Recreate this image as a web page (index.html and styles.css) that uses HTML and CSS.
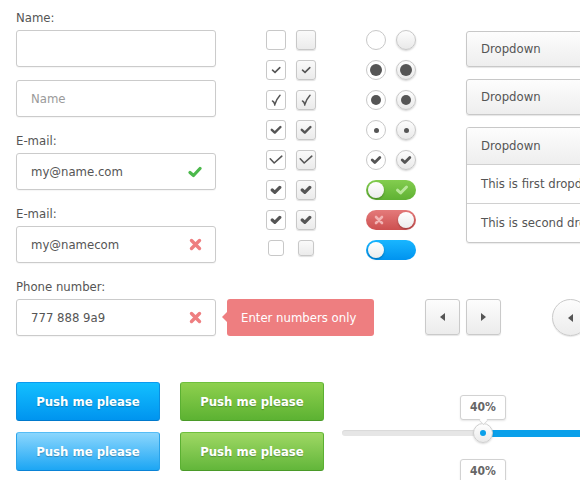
FILE: index.html
```html
<!DOCTYPE html>
<html lang="en">
<head>
    <meta charset="UTF-8">
    <title>UI Kit</title>
    <link rel="stylesheet" href="styles.css">
</head>
<body>
    <div class="top">
        <!-- Text fields -->
        <div class="form">
            <div class="field">
                <label>Name:</label>
                <div class="input"><input type="text" value=""></div>
                <div class="input second"><input type="text" placeholder="Name"></div>
            </div>
            <div class="field">
                <label>E-mail:</label>
                <div class="input">
                    <input type="text" value="my@name.com">
                    <svg class="ico" width="14" height="12" viewBox="0 0 14 12"><path d="M2 6.5 L5.5 9.5 L12 2.5" fill="none" stroke="#4cb94c" stroke-width="3.2" stroke-linecap="round" stroke-linejoin="round"/></svg>
                </div>
            </div>
            <div class="field">
                <label>E-mail:</label>
                <div class="input">
                    <input type="text" value="my@namecom">
                    <svg class="ico" width="13" height="13" viewBox="0 0 13 13"><path d="M2.5 2.5 L10.5 10.5 M10.5 2.5 L2.5 10.5" fill="none" stroke="#ee7e80" stroke-width="3.4" stroke-linecap="round"/></svg>
                </div>
            </div>
        </div>

        <!-- Checkboxes -->
        <div class="checks">
            <span class="cb"></span><span class="cb alt"></span>
            <span class="cb"><svg width="10" height="8" viewBox="0 0 10 8"><path d="M1.5 4.2 L4 6.3 L8.8 1.6" fill="none" stroke="#555" stroke-width="1.6" stroke-linecap="round"/></svg></span>
            <span class="cb alt"><svg width="10" height="8" viewBox="0 0 10 8"><path d="M1.5 4.2 L4 6.3 L8.8 1.6" fill="none" stroke="#555" stroke-width="1.6" stroke-linecap="round"/></svg></span>
            <span class="cb"><svg width="10" height="12" viewBox="0 0 10 12"><path d="M1.5 7 Q3 7.5 3.8 10.5 Q5.5 5 9 1.2" fill="none" stroke="#555" stroke-width="1.5" stroke-linecap="round"/></svg></span>
            <span class="cb alt"><svg width="10" height="12" viewBox="0 0 10 12"><path d="M1.5 7 Q3 7.5 3.8 10.5 Q5.5 5 9 1.2" fill="none" stroke="#555" stroke-width="1.5" stroke-linecap="round"/></svg></span>
            <span class="cb"><svg width="12" height="10" viewBox="0 0 12 10"><path d="M1.8 4.8 L4.8 7.6 L10.4 2" fill="none" stroke="#555" stroke-width="2.4" stroke-linecap="round" stroke-linejoin="round"/></svg></span>
            <span class="cb alt"><svg width="12" height="10" viewBox="0 0 12 10"><path d="M1.8 4.8 L4.8 7.6 L10.4 2" fill="none" stroke="#555" stroke-width="2.4" stroke-linecap="round" stroke-linejoin="round"/></svg></span>
            <span class="cb"><svg width="14" height="10" viewBox="0 0 14 10"><path d="M1.2 3.8 L5.2 8 L12.8 1.2" fill="none" stroke="#555" stroke-width="1.6" stroke-linecap="round" stroke-linejoin="round"/></svg></span>
            <span class="cb alt"><svg width="14" height="10" viewBox="0 0 14 10"><path d="M1.2 3.8 L5.2 8 L12.8 1.2" fill="none" stroke="#555" stroke-width="1.6" stroke-linecap="round" stroke-linejoin="round"/></svg></span>
            <span class="cb"><svg width="12" height="10" viewBox="0 0 12 10"><path d="M2.2 5 L4.8 7.4 L9.8 2.4" fill="none" stroke="#555" stroke-width="3.2" stroke-linecap="round" stroke-linejoin="round"/></svg></span>
            <span class="cb alt"><svg width="12" height="10" viewBox="0 0 12 10"><path d="M2.2 5 L4.8 7.4 L9.8 2.4" fill="none" stroke="#555" stroke-width="3.2" stroke-linecap="round" stroke-linejoin="round"/></svg></span>
            <span class="cb"><svg width="12" height="10" viewBox="0 0 12 10"><path d="M2.2 5 L4.8 7.4 L9.8 2.4" fill="none" stroke="#555" stroke-width="3.2" stroke-linecap="round" stroke-linejoin="round"/></svg></span>
            <span class="cb alt"><svg width="12" height="10" viewBox="0 0 12 10"><path d="M2.2 5 L4.8 7.4 L9.8 2.4" fill="none" stroke="#555" stroke-width="3.2" stroke-linecap="round" stroke-linejoin="round"/></svg></span>
            <span class="cb small"></span><span class="cb alt small"></span>
        </div>

        <!-- Radios and toggles -->
        <div class="radios">
            <span class="rd"></span><span class="rd alt"></span>
            <span class="rd"><i class="dot big"></i></span><span class="rd alt"><i class="dot big"></i></span>
            <span class="rd"><i class="dot mid"></i></span><span class="rd alt"><i class="dot mid"></i></span>
            <span class="rd"><i class="dot tiny"></i></span><span class="rd alt"><i class="dot tiny"></i></span>
            <span class="rd"><svg width="12" height="10" viewBox="0 0 12 10"><path d="M2.2 5 L4.8 7.4 L9.8 2.4" fill="none" stroke="#555" stroke-width="2.8" stroke-linecap="round" stroke-linejoin="round"/></svg></span>
            <span class="rd alt"><svg width="12" height="10" viewBox="0 0 12 10"><path d="M2.2 5 L4.8 7.4 L9.8 2.4" fill="none" stroke="#555" stroke-width="2.8" stroke-linecap="round" stroke-linejoin="round"/></svg></span>
            <span class="tg on">
                <i class="knob"></i>
                <svg width="14" height="12" viewBox="0 0 14 12"><path d="M2.5 6.2 L5.6 9 L11.5 3" fill="none" stroke="#b9e79b" stroke-width="3" stroke-linecap="round" stroke-linejoin="round"/></svg>
            </span>
            <span class="tg off">
                <svg width="12" height="12" viewBox="0 0 12 12"><path d="M3 3 L9 9 M9 3 L3 9" fill="none" stroke="#f2b3b3" stroke-width="2.6" stroke-linecap="round"/></svg>
                <i class="knob"></i>
            </span>
            <span class="tg blue"><i class="knob"></i></span>
        </div>

        <!-- Dropdowns -->
        <div class="drops">
            <div class="dd">Dropdown</div>
            <div class="dd">Dropdown</div>
            <div class="dd-menu">
                <div class="dd-head">Dropdown</div>
                <div class="dd-item">This is first dropdown</div>
                <div class="dd-item">This is second dropdown</div>
            </div>
        </div>
    </div>

    <div class="phone-row">
        <div class="field">
            <label>Phone number:</label>
            <div class="input">
                <input type="text" value="777 888 9a9">
                <svg class="ico" width="13" height="13" viewBox="0 0 13 13"><path d="M2.5 2.5 L10.5 10.5 M10.5 2.5 L2.5 10.5" fill="none" stroke="#ee7e80" stroke-width="3.4" stroke-linecap="round"/></svg>
            </div>
        </div>
        <div class="error-tip">Enter numbers only</div>
        <div class="arrows">
            <span class="arrow-btn"><i class="tri left"></i></span>
            <span class="arrow-btn"><i class="tri right"></i></span>
        </div>
        <span class="round-btn"><i class="tri left"></i></span>
    </div>

    <div class="bottom">
        <div class="buttons">
            <button class="btn blue">Push me please</button>
            <button class="btn green">Push me please</button>
            <button class="btn blue hover">Push me please</button>
            <button class="btn green hover">Push me please</button>
        </div>
        <div class="slider-box">
            <div class="slider">
                <div class="fill" style="left: 40%;"></div>
                <div class="thumb" style="left: 40%;"><i></i></div>
                <div class="val up" style="left: 40%;">40%</div>
                <div class="val down" style="left: 40%;">40%</div>
            </div>
        </div>
    </div>
</body>
</html>
```

FILE: styles.css
```css
html, body {
    overflow: hidden;
}
body {
    margin: 0;
    padding: 10px 0 0 16px;
    width: 580px;
    height: 480px;
    box-sizing: border-box;
    font-family: "DejaVu Sans Condensed", "DejaVu Sans", Verdana, sans-serif;
    font-size: 13px;
    color: #555;
    background: #fff;
}

/* text fields */
.top {
    display: flex;
    align-items: flex-start;
}
.form {
    width: 200px;
    flex-shrink: 0;
}
.field {
    width: 200px;
    margin-bottom: 16px;
}
.field label {
    display: block;
    line-height: 16px;
    margin-bottom: 4px;
}
.input {
    box-sizing: border-box;
    height: 37px;
    border: 1px solid #cbcbcb;
    border-radius: 3px;
    background: #fff;
    box-shadow: 0 1px 1px rgba(0, 0, 0, 0.04);
    display: flex;
    align-items: center;
    padding: 0 13px 0 14px;
}
.input.second {
    margin-top: 13px;
}
.input input {
    flex: 1;
    min-width: 0;
    border: 0;
    outline: 0;
    padding: 0;
    font: inherit;
    color: #555;
    background: transparent;
}
.input input::placeholder {
    color: #9a9a9a;
}
.ico {
    flex-shrink: 0;
}

/* checkboxes */
.checks, .radios {
    display: grid;
    grid-template-columns: 20px 20px;
    grid-auto-rows: 20px;
    gap: 10px;
    margin-top: 20px;
    margin-left: 50px;
    flex-shrink: 0;
}
.cb {
    box-sizing: border-box;
    width: 20px;
    height: 20px;
    border: 1px solid #c8c8c8;
    border-radius: 3px;
    background: #fff;
    display: flex;
    align-items: center;
    justify-content: center;
}
.cb.alt {
    background: linear-gradient(#fafafa, #ebebeb);
    box-shadow: 0 1px 1px rgba(0, 0, 0, 0.12);
}
.cb.small {
    width: 16px;
    height: 16px;
    justify-self: center;
    align-self: start;
}

/* radios */
.rd {
    box-sizing: border-box;
    width: 20px;
    height: 20px;
    border: 1px solid #c8c8c8;
    border-radius: 50%;
    background: #fff;
    display: flex;
    align-items: center;
    justify-content: center;
}
.rd.alt {
    background: linear-gradient(#fdfdfd, #e9e9e9);
    box-shadow: 0 1px 2px rgba(0, 0, 0, 0.18);
}
.dot {
    display: block;
    border-radius: 50%;
    background: #555;
}
.dot.big { width: 12px; height: 12px; }
.dot.mid { width: 10px; height: 10px; }
.dot.tiny { width: 5px; height: 5px; }

/* toggles */
.tg {
    grid-column: span 2;
    width: 50px;
    height: 20px;
    border-radius: 10px;
    box-sizing: border-box;
    padding: 0 2px;
    display: flex;
    align-items: center;
    justify-content: space-between;
}
.tg.on {
    background: linear-gradient(#83cd4f, #5fb133);
    padding-right: 7px;
}
.tg.off {
    background: linear-gradient(#e47a7a, #cd5050);
    padding-left: 7px;
}
.tg.blue {
    background: linear-gradient(#19b6ff, #0093ef);
}
.knob {
    display: block;
    width: 16px;
    height: 16px;
    border-radius: 50%;
    background: linear-gradient(#fff, #ececec);
    box-shadow: 0 1px 2px rgba(0, 0, 0, 0.3);
}

/* dropdowns */
.drops {
    margin-top: 21px;
    margin-left: 50px;
    width: 160px;
    flex-shrink: 0;
}
.dd, .dd-head {
    box-sizing: border-box;
    height: 36px;
    line-height: 34px;
    padding-left: 14px;
    border: 1px solid #c8c8c8;
    border-radius: 3px;
    background: linear-gradient(#fdfdfd, #eeeeee);
    box-shadow: 0 1px 1px rgba(0, 0, 0, 0.1);
    margin-bottom: 12px;
}
.dd-menu {
    border: 1px solid #c8c8c8;
    border-radius: 3px;
    overflow: hidden;
    box-shadow: 0 1px 1px rgba(0, 0, 0, 0.08);
}
.dd-head {
    border: 0;
    border-radius: 0;
    box-shadow: none;
    margin: 0;
    line-height: 36px;
}
.dd-item {
    height: 38px;
    line-height: 38px;
    padding-left: 14px;
    border-top: 1px solid #d0d0d0;
    white-space: nowrap;
}

/* phone row */
.phone-row {
    display: flex;
    align-items: flex-end;
}
.phone-row .field {
    flex-shrink: 0;
}
.error-tip {
    position: relative;
    flex-shrink: 0;
    box-sizing: border-box;
    width: 147px;
    height: 37px;
    line-height: 37px;
    margin: 0 0 16px 11px;
    padding-left: 14px;
    border-radius: 3px;
    background: #ee7e80;
    color: #fff;
    white-space: nowrap;
}
.error-tip::before {
    content: "";
    position: absolute;
    left: -5px;
    top: 13px;
    border-style: solid;
    border-width: 5px 5px 5px 0;
    border-color: transparent #ee7e80 transparent transparent;
}
.arrows {
    display: flex;
    gap: 6px;
    margin: 0 0 17px 51px;
    flex-shrink: 0;
}
.arrow-btn, .round-btn {
    box-sizing: border-box;
    width: 35px;
    height: 36px;
    border: 1px solid #cacaca;
    border-radius: 3px;
    background: linear-gradient(#fdfdfd, #ececec);
    box-shadow: 0 1px 1px rgba(0, 0, 0, 0.1);
    display: flex;
    align-items: center;
    justify-content: center;
    flex-shrink: 0;
}
.round-btn {
    width: 37px;
    height: 37px;
    border-radius: 50%;
    margin: 0 0 16px 51px;
}
.tri {
    display: block;
    border-style: solid;
}
.tri.left {
    border-width: 4px 5px 4px 0;
    border-color: transparent #555 transparent transparent;
}
.tri.right {
    border-width: 4px 0 4px 5px;
    border-color: transparent transparent transparent #555;
}

/* buttons */
.bottom {
    display: flex;
    margin-top: 30px;
}
.buttons {
    display: grid;
    grid-template-columns: 144px 144px;
    column-gap: 20px;
    row-gap: 11px;
    flex-shrink: 0;
}
.btn {
    height: 39px;
    border: 1px solid;
    border-radius: 3px;
    font-family: inherit;
    font-weight: bold;
    font-size: 13px;
    color: #fff;
    text-shadow: 0 1px 1px rgba(0, 0, 0, 0.25);
    padding: 0;
}
.btn.blue {
    background: linear-gradient(#13bfff, #0094ef);
    border-color: #0a9af0 #0a8ee0 #0079cc;
}
.btn.blue.hover {
    background: linear-gradient(#8bd6fd, #1ca6f4);
    border-color: #55bdf6 #2aa3ea #0a83d6;
}
.btn.green {
    background: linear-gradient(#8ed04e, #5cb232);
    border-color: #6fc03d #5bb032 #4a9a28;
}
.btn.green.hover {
    background: linear-gradient(#9fd864, #62b63a);
}

/* slider */
.slider-box {
    margin-left: 18px;
    padding-top: 48px;
    flex-shrink: 0;
}
.slider {
    position: relative;
    width: 352px;
    height: 6px;
    border-radius: 3px;
    background: #e6e6e6;
    box-shadow: inset 0 1px 1px rgba(0, 0, 0, 0.06);
}
.fill {
    position: absolute;
    top: 0;
    right: 0;
    height: 7px;
    background: #0aa0ea;
}
.thumb {
    position: absolute;
    top: -7px;
    width: 20px;
    height: 20px;
    margin-left: -10px;
    box-sizing: border-box;
    border: 1px solid #cfcfcf;
    border-radius: 50%;
    background: linear-gradient(#fff, #eaeaea);
    box-shadow: 0 1px 2px rgba(0, 0, 0, 0.15);
    display: flex;
    align-items: center;
    justify-content: center;
}
.thumb i {
    display: block;
    width: 6px;
    height: 6px;
    border-radius: 50%;
    background: #0aa0ea;
}
.val {
    position: absolute;
    width: 46px;
    height: 25px;
    margin-left: -23px;
    box-sizing: border-box;
    border: 1px solid #d2d2d2;
    border-radius: 3px;
    background: #fff;
    box-shadow: 0 1px 2px rgba(0, 0, 0, 0.1);
    font-weight: bold;
    font-size: 12px;
    line-height: 23px;
    text-align: center;
    color: #666;
}
.val.up {
    bottom: 16px;
}
.val.up::after {
    content: "";
    position: absolute;
    left: 18px;
    bottom: -6px;
    width: 8px;
    height: 8px;
    background: #fff;
    border-right: 1px solid #d2d2d2;
    border-bottom: 1px solid #d2d2d2;
    transform: rotate(45deg) scale(0.7, 0.7);
}
.val.down {
    top: 29px;
}
```
